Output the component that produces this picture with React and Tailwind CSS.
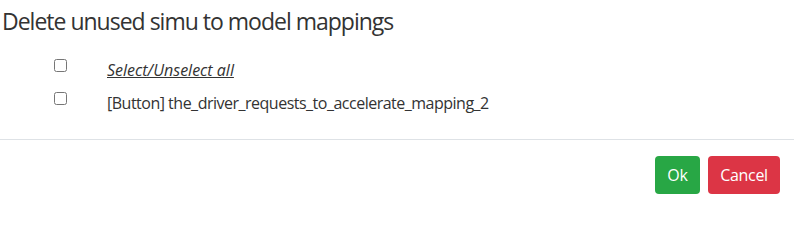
export default function App() {
  const font = { fontFamily: '"Open Sans", "Noto Sans", sans-serif' };
  return (
    <div className="w-[794px] h-[208px] bg-white text-[#212529]" style={font}>
      <div className="h-[46px] pl-[2px] pt-[3px]">
        <h5 className="text-[23px] leading-[36px] tracking-[-1px] font-normal text-[#333]">Delete unused simu to model mappings</h5>
      </div>
      <div className="h-[93px] pt-[12px]">
        <div className="flex items-start h-[33px]">
          <div className="w-[54px]" />
          <input type="checkbox" className="w-[13px] h-[13px] mt-[1px]" />
          <div className="w-[40px]" />
          <span className="text-[16px] leading-[24px] italic underline text-[#333]">Select/Unselect all</span>
        </div>
        <div className="flex items-start h-[33px]">
          <div className="w-[54px]" />
          <input type="checkbox" className="w-[13px] h-[13px] mt-[1px]" />
          <div className="w-[40px]" />
          <span className="text-[16px] leading-[24px] tracking-[-0.5px] text-[#333]">[Button] the_driver_requests_to_accelerate_mapping_2</span>
        </div>
      </div>
      <div className="border-t border-[#dee2e6] flex justify-end items-center gap-[8px] pr-[14px] pt-[16px]">
        <button className="h-[38px] px-[12px] rounded-[4px] bg-[#28a745] text-white text-[16px] leading-[24px]">Ok</button>
        <button className="h-[38px] w-[72px] rounded-[4px] bg-[#dc3545] text-white text-[16px] leading-[24px] tracking-[-0.3px]">Cancel</button>
      </div>
    </div>
  );
}
